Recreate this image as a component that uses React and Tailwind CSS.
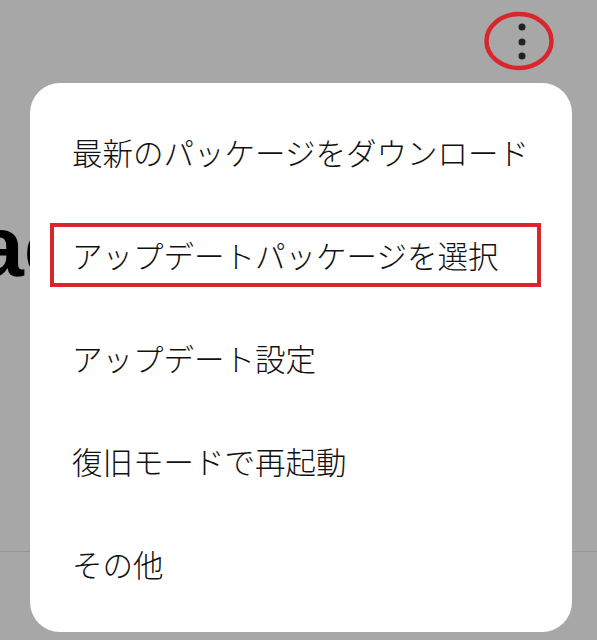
import React from "react";

const items = [
  "最新のパッケージをダウンロード",
  "アップデートパッケージを選択",
  "アップデート設定",
  "復旧モードで再起動",
  "その他",
];

export default function App() {
  return (
    <div className="relative w-[597px] h-[640px] overflow-hidden bg-[#a7a7a7]" style={{ fontFamily: '"Noto Sans CJK JP", "Noto Sans", sans-serif' }}>
      {/* background page */}
      <div className="flex flex-col">
        <div className="flex justify-end h-[83px] pr-[40px] pt-[6px]">
          <svg width="80" height="66" viewBox="0 0 80 66">
            <ellipse cx="42" cy="35" rx="32.5" ry="27" fill="none" stroke="#d9262c" strokeWidth="4.5" />
            <circle cx="45" cy="21" r="3.5" fill="#222" />
            <circle cx="45" cy="36" r="3.5" fill="#222" />
            <circle cx="45" cy="50" r="3.5" fill="#222" />
          </svg>
        </div>
        <div className="h-[120px]" />
        <div className="ml-[-24px] text-[86px] font-bold leading-none text-black font-['Liberation_Sans',Arial,sans-serif]">
          ac
        </div>
        <div className="h-[262px]" />
        <div className="h-px bg-[#969696]" />
      </div>

      {/* menu */}
      <div className="absolute left-[30px] top-[83px] w-[542px] h-[549px] rounded-[30px] bg-white">
        <div className="flex flex-col pt-[18px]">
          {items.map((t) => (
            <div key={t} className="h-[103px] flex items-center pl-[42px] text-[30.5px] text-[#111] font-light">
              {t}
            </div>
          ))}
        </div>
        <div className="absolute left-[20px] top-[140px] w-[491px] h-[64px] border-4 border-[#d9262c]" />
      </div>
    </div>
  );
}
